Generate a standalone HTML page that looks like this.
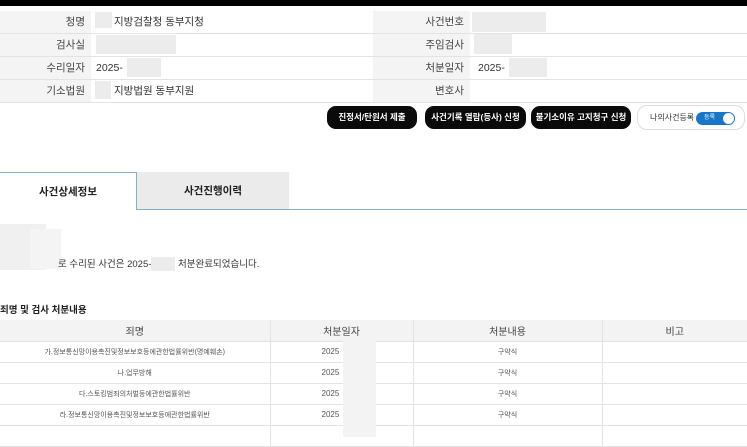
<!DOCTYPE html>
<html><head><meta charset="utf-8"><style>
*{margin:0;padding:0;box-sizing:border-box}
body{width:747px;height:437px;overflow:hidden;background:#fff;font-family:"Liberation Sans","Noto Sans CJK KR",sans-serif;color:#333;position:relative}
.a{position:absolute}
.bar{left:0;top:0;width:747px;height:6px;background:#000}
.row{left:0;width:747px;height:23px;border-bottom:1px solid #e3e3e3;font-size:10.5px}
.lab{position:absolute;top:0;height:22px;background:#f4f4f4;text-align:right;padding-right:6px;line-height:22px;color:#444}
.val{position:absolute;top:0;line-height:22px;color:#333}
.blur{position:absolute;background:#ececec}
.btn{top:106px;height:23px;background:#0a0a0a;color:#fff;border-radius:9px;font-size:8.5px;text-align:center;line-height:23px;font-weight:bold}
.tab{font-size:10.5px;font-weight:bold;text-align:center;line-height:38px;color:#222}
table{border-collapse:collapse;font-size:7px;color:#555}
td,th{height:21px;text-align:center;border-bottom:1px solid #e3e3e3;border-right:1px solid #e3e3e3}
th{background:#f3f3f3;font-weight:normal;font-size:10px;color:#444}
td.d{text-align:left;padding-left:51px;font-size:8px}
</style></head><body>
<div class="a bar"></div>
<div class="a row" style="top:11px"><div class="lab" style="left:0;width:91px">청명</div><div class="val" style="left:96px"><span style="display:inline-block;width:18px"></span>지방검찰청 동부지청</div><div class="blur" style="left:95px;top:1px;width:17px;height:16px"></div><div class="lab" style="left:373px;width:97px">사건번호</div><div class="blur" style="left:472px;top:1px;width:74px;height:20px"></div></div>
<div class="a row" style="top:34px"><div class="lab" style="left:0;width:91px">검사실</div><div class="blur" style="left:96px;top:1px;width:80px;height:19px"></div><div class="lab" style="left:373px;width:97px">주임검사</div><div class="blur" style="left:474px;top:0;width:38px;height:20px"></div></div>
<div class="a row" style="top:57px"><div class="lab" style="left:0;width:91px">수리일자</div><div class="val" style="left:96px">2025-</div><div class="blur" style="left:127px;top:1px;width:34px;height:19px"></div><div class="lab" style="left:373px;width:97px">처분일자</div><div class="val" style="left:478px">2025-</div><div class="blur" style="left:509px;top:1px;width:38px;height:19px"></div></div>
<div class="a row" style="top:80px"><div class="lab" style="left:0;width:91px">기소법원</div><div class="val" style="left:96px"><span style="display:inline-block;width:18px"></span>지방법원 동부지원</div><div class="blur" style="left:95px;top:1px;width:16px;height:18px"></div><div class="lab" style="left:373px;width:97px">변호사</div></div>
<div class="a btn" style="left:327px;width:90px">진정서/탄원서 제출</div>
<div class="a btn" style="left:425px;width:101px">사건기록 열람(등사) 신청</div>
<div class="a btn" style="left:531px;width:100px">불기소이유 고지청구 신청</div>
<div class="a" style="left:637px;top:105px;width:108px;height:25px;border:1px solid #ddd;border-radius:10px;font-size:8px;line-height:23px;padding-left:12px;color:#333">나의사건등록
<div class="a" style="left:58px;top:6px;width:39px;height:13px;background:#1677c8;border-radius:7px;color:#fff;font-size:6px;line-height:13px;padding-left:8px">등록<div class="a" style="right:1px;top:1px;width:11px;height:11px;border-radius:50%;background:#fff"></div></div></div>
<div class="a" style="left:136px;top:209px;width:611px;height:1px;background:#7fb2c2"></div>
<div class="a tab" style="left:0;top:172px;width:137px;height:38px;border:1px solid #7fb2c2;border-bottom:none;border-left:none;background:#fff">사건상세정보</div>
<div class="a tab" style="left:137px;top:172px;width:152px;height:37px;background:#ebebeb">사건진행이력</div>
<div class="blur" style="left:0;top:224px;width:46px;height:46px;background:#f0f0f0"></div>
<div class="blur" style="left:30px;top:229px;width:31px;height:40px;background:#f4f4f4"></div>
<div class="a" style="left:58px;top:256px;font-size:9.5px;color:#333">로 수리된 사건은 2025-<span style="display:inline-block;width:24px;height:14px;background:#ececec;vertical-align:middle"></span> 처분완료되었습니다.</div>
<div class="a" style="left:0;top:302px;font-size:9.5px;font-weight:bold;color:#222">죄명 및 검사 처분내용</div>
<table class="a" style="left:0;top:320px;width:747px">
<tr><th style="width:270px">죄명</th><th style="width:143px">처분일자</th><th style="width:189px">처분내용</th><th style="border-right:none">비고</th></tr>
<tr><td>가.정보통신망이용촉진및정보보호등에관한법률위반(명예훼손)</td><td class="d">2025</td><td>구약식</td><td style="border-right:none"></td></tr>
<tr><td>나.업무방해</td><td class="d">2025</td><td>구약식</td><td style="border-right:none"></td></tr>
<tr><td>다.스토킹범죄의처벌등에관한법률위반</td><td class="d">2025</td><td>구약식</td><td style="border-right:none"></td></tr>
<tr><td>라.정보통신망이용촉진및정보보호등에관한법률위반</td><td class="d">2025</td><td>구약식</td><td style="border-right:none"></td></tr>
<tr><td></td><td></td><td></td><td style="border-right:none"></td></tr>
</table>
<div class="blur" style="left:343px;top:341px;width:33px;height:96px;background:#f3f3f3"></div>
</body></html>
